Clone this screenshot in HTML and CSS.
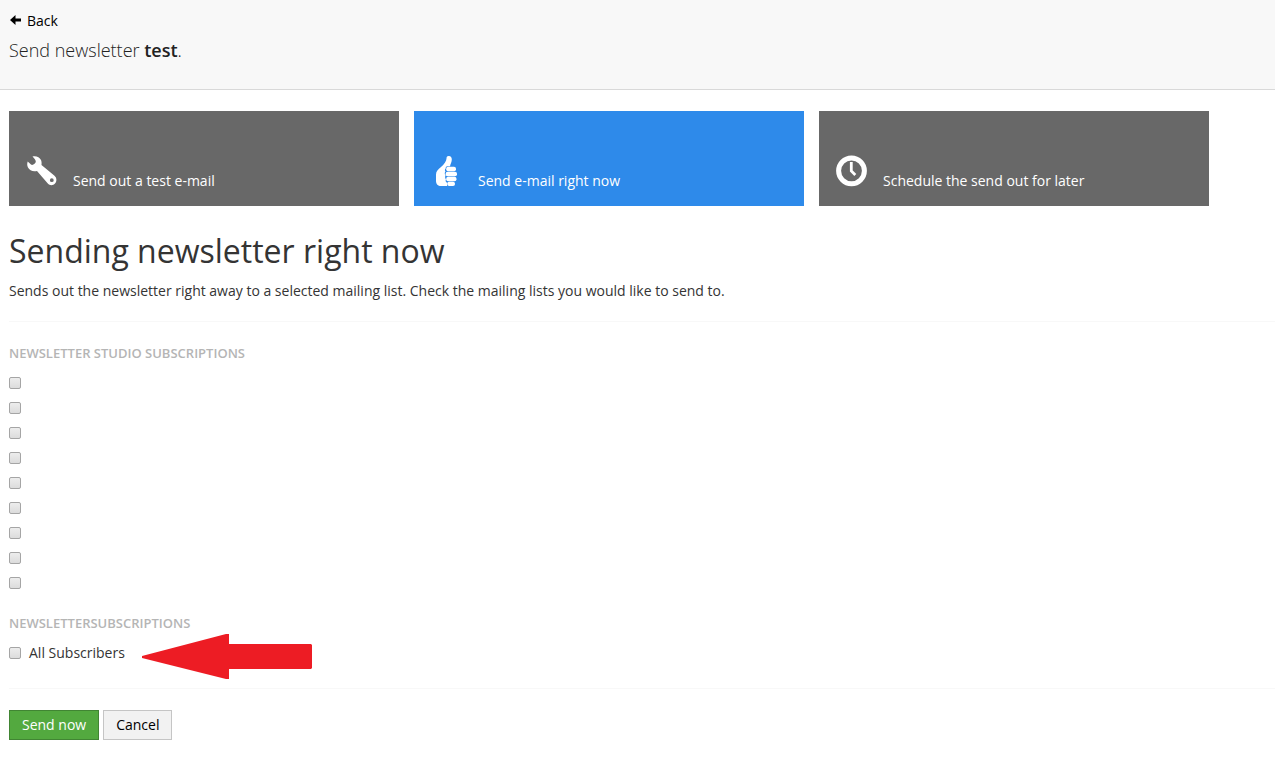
FILE: index.html
```html
<!DOCTYPE html>
<html lang="en">
<head>
    <meta charset="UTF-8">
    <meta name="viewport" content="width=device-width, initial-scale=1.0">
    <title>Send newsletter</title>
    <link rel="stylesheet" href="styles.css">
</head>
<body>
    <header class="page-header">
        <a href="#" class="back">
            <svg class="back-icon" viewBox="0 0 12 12" aria-hidden="true"><path d="M1 5 6.500 0V3.500H12V6.500H6.500V10Z"/></svg>
            Back
        </a>
        <p class="page-title">Send newsletter <strong>test</strong>.</p>
    </header>

    <main class="content">
        <nav class="tiles">
            <a href="#" class="tile">
                <svg class="tile-icon" viewBox="0 0 32 32" aria-hidden="true">
                    <path fill-rule="evenodd" d="M7.500 1.500C11 .500 14.500 2 16 5 16.700 6.700 16.700 8.500 16.500 10L29.500 20.800C32 23 32 26.500 30 28.500 28 30.700 24.800 30.700 22.800 28.500L12 16C8 17 4.500 15.500 3 12.500 2 10.500 2 8.500 2.700 6.500L6 9.500C7.500 10.800 10.800 8.500 10.800 6.500 10.800 5.300 9.500 3.500 7.500 1.500ZM26.800 23.300A1.900 1.900 0 1 0 26.800 27.100 1.900 1.900 0 1 0 26.800 23.300Z"/>
                </svg>
                <span>Send out a test e-mail</span>
            </a>
            <a href="#" class="tile active">
                <svg class="tile-icon" viewBox="0 0 32 32" aria-hidden="true">
                    <path d="M18.500 1C20.500 .700 21.800 2.200 21.800 4.500 21.800 7 20.500 9 20 11.300H17.500C16.200 11.300 15.500 12 15.800 13.300 14.800 14 14.600 15.500 15.500 16.600 14.500 17.500 14.500 19.500 15.600 20.500 14.800 21.500 15 23.300 16 24.200 15.300 25.200 15.500 27 17 27.800V31H11C8 31 6 29 6 26V19.500C6 16 8 14.500 11 12 14 9.500 16.500 6 16.500 3.500 16.500 2 17 1.200 18.500 1Z"/>
                    <rect x="16.200" y="11.800" width="9.800" height="4.500" rx="2"/>
                    <rect x="15.600" y="16.800" width="11.400" height="4.500" rx="2"/>
                    <rect x="16.200" y="21.800" width="10.300" height="4.500" rx="2"/>
                    <rect x="17.200" y="26.800" width="7.800" height="4.200" rx="2"/>
                </svg>
                <span>Send e-mail right now</span>
            </a>
            <a href="#" class="tile">
                <svg class="tile-icon" viewBox="0 0 32 32" aria-hidden="true">
                    <g fill="none" stroke="currentColor">
                        <circle cx="16.500" cy="15.800" r="12.900" stroke-width="5"/>
                        <path d="M16.300 7V16L20.300 20" stroke-width="2.800"/>
                    </g>
                </svg>
                <span>Schedule the send out for later</span>
            </a>
        </nav>

        <h1>Sending newsletter right now</h1>
        <p class="intro">Sends out the newsletter right away to a selected mailing list. Check the mailing lists you would like to send to.</p>

        <form>
            <div class="lists">
                <fieldset>
                    <legend>Newsletter Studio Subscriptions</legend>
                    <label class="checkbox"><input type="checkbox" name="list" value="1" aria-label="List 1"></label>
                    <label class="checkbox"><input type="checkbox" name="list" value="2" aria-label="List 2"></label>
                    <label class="checkbox"><input type="checkbox" name="list" value="3" aria-label="List 3"></label>
                    <label class="checkbox"><input type="checkbox" name="list" value="4" aria-label="List 4"></label>
                    <label class="checkbox"><input type="checkbox" name="list" value="5" aria-label="List 5"></label>
                    <label class="checkbox"><input type="checkbox" name="list" value="6" aria-label="List 6"></label>
                    <label class="checkbox"><input type="checkbox" name="list" value="7" aria-label="List 7"></label>
                    <label class="checkbox"><input type="checkbox" name="list" value="8" aria-label="List 8"></label>
                    <label class="checkbox"><input type="checkbox" name="list" value="9" aria-label="List 9"></label>
                </fieldset>
                <fieldset>
                    <legend>NewsletterSubscriptions</legend>
                    <div class="row">
                        <label class="checkbox"><input type="checkbox" name="list" value="all"> All Subscribers</label>
                        <!-- pointer to the list to pick -->
                        <svg class="pointer" viewBox="0 0 170 45" aria-hidden="true"><path d="M0 22 84 0H87V10H169L170 11V34L169 35H87V45H84L0 24Z"/></svg>
                    </div>
                </fieldset>
            </div>

            <div class="actions">
                <button type="submit" class="btn btn-success">Send now</button>
                <button type="button" class="btn">Cancel</button>
            </div>
        </form>
    </main>
</body>
</html>
```
FILE: styles.css
```css
body {
    margin: 0;
    font-family: "Open Sans", sans-serif;
    font-size: 14px;
    line-height: 20px;
    color: #343434;
    background-color: #fff;
}
a {
    color: #000;
    text-decoration: none;
}
.page-header {
    padding: 11px 9px 29px;
    background-color: #f8f8f8;
    border-bottom: 1px solid #d9d9d9;
}
.back {
    display: flex;
    align-items: center;
    gap: 6px;
}
.back-icon {
    width: 12px;
    height: 12px;
}
.page-title {
    margin: 9px 0 0;
    font-size: 18px;
    font-weight: 300;
    color: #222;
}
.page-title strong {
    font-weight: 600;
}
.content {
    padding: 21px 0 20px 9px;
}
.tiles {
    display: flex;
    flex-wrap: wrap;
    gap: 15px;
}
.tile {
    display: flex;
    align-items: flex-end;
    gap: 16px;
    box-sizing: border-box;
    width: 390px;
    height: 95px;
    padding: 15px 16px;
    color: #fff;
    background-color: #686868;
}
.tile.active {
    background-color: #2e8aea;
}
.tile-icon {
    width: 32px;
    height: 40px;
    fill: currentColor;
}
h1 {
    margin: 25px 0 10px;
    font-size: 32px;
    font-weight: 400;
    line-height: 40px;
}
.intro {
    margin: 0 0 20px;
}
.lists {
    padding: 21px 0 25px;
    border-top: 1px solid #f8f8f8;
    border-bottom: 1px solid #f8f8f8;
}
fieldset {
    margin: 0;
    padding: 0;
    border: 0;
}
fieldset + fieldset {
    margin-top: 15px;
}
legend {
    margin-bottom: 10px;
    padding: 0;
    font-size: 13px;
    font-weight: 600;
    color: #b5b5b5;
    text-transform: uppercase;
}
.checkbox {
    display: flex;
    align-items: center;
    gap: 8px;
    height: 20px;
    margin-bottom: 5px;
}
.checkbox input {
    appearance: none;
    width: 12px;
    height: 12px;
    margin: 0;
    border: 1px solid #a5a5a5;
    border-radius: 2px;
    background: linear-gradient(#ededed, #dcdcdc);
}
.checkbox input:checked {
    background: #2e8aea;
}
.row {
    position: relative;
}
.row .checkbox {
    margin-bottom: 0;
}
.pointer {
    position: absolute;
    top: -9px;
    left: 133px;
    width: 170px;
    height: 45px;
    fill: #ed1c24;
}
.actions {
    display: flex;
    gap: 4px;
    margin-top: 21px;
}
.btn {
    padding: 4px 12px;
    border: 1px solid #c5c5c5;
    background-color: #f2f2f2;
    font: inherit;
    color: #000;
    cursor: pointer;
}
.btn-success {
    border-color: #418533;
    background-color: #53a93f;
    color: #fff;
}
```
